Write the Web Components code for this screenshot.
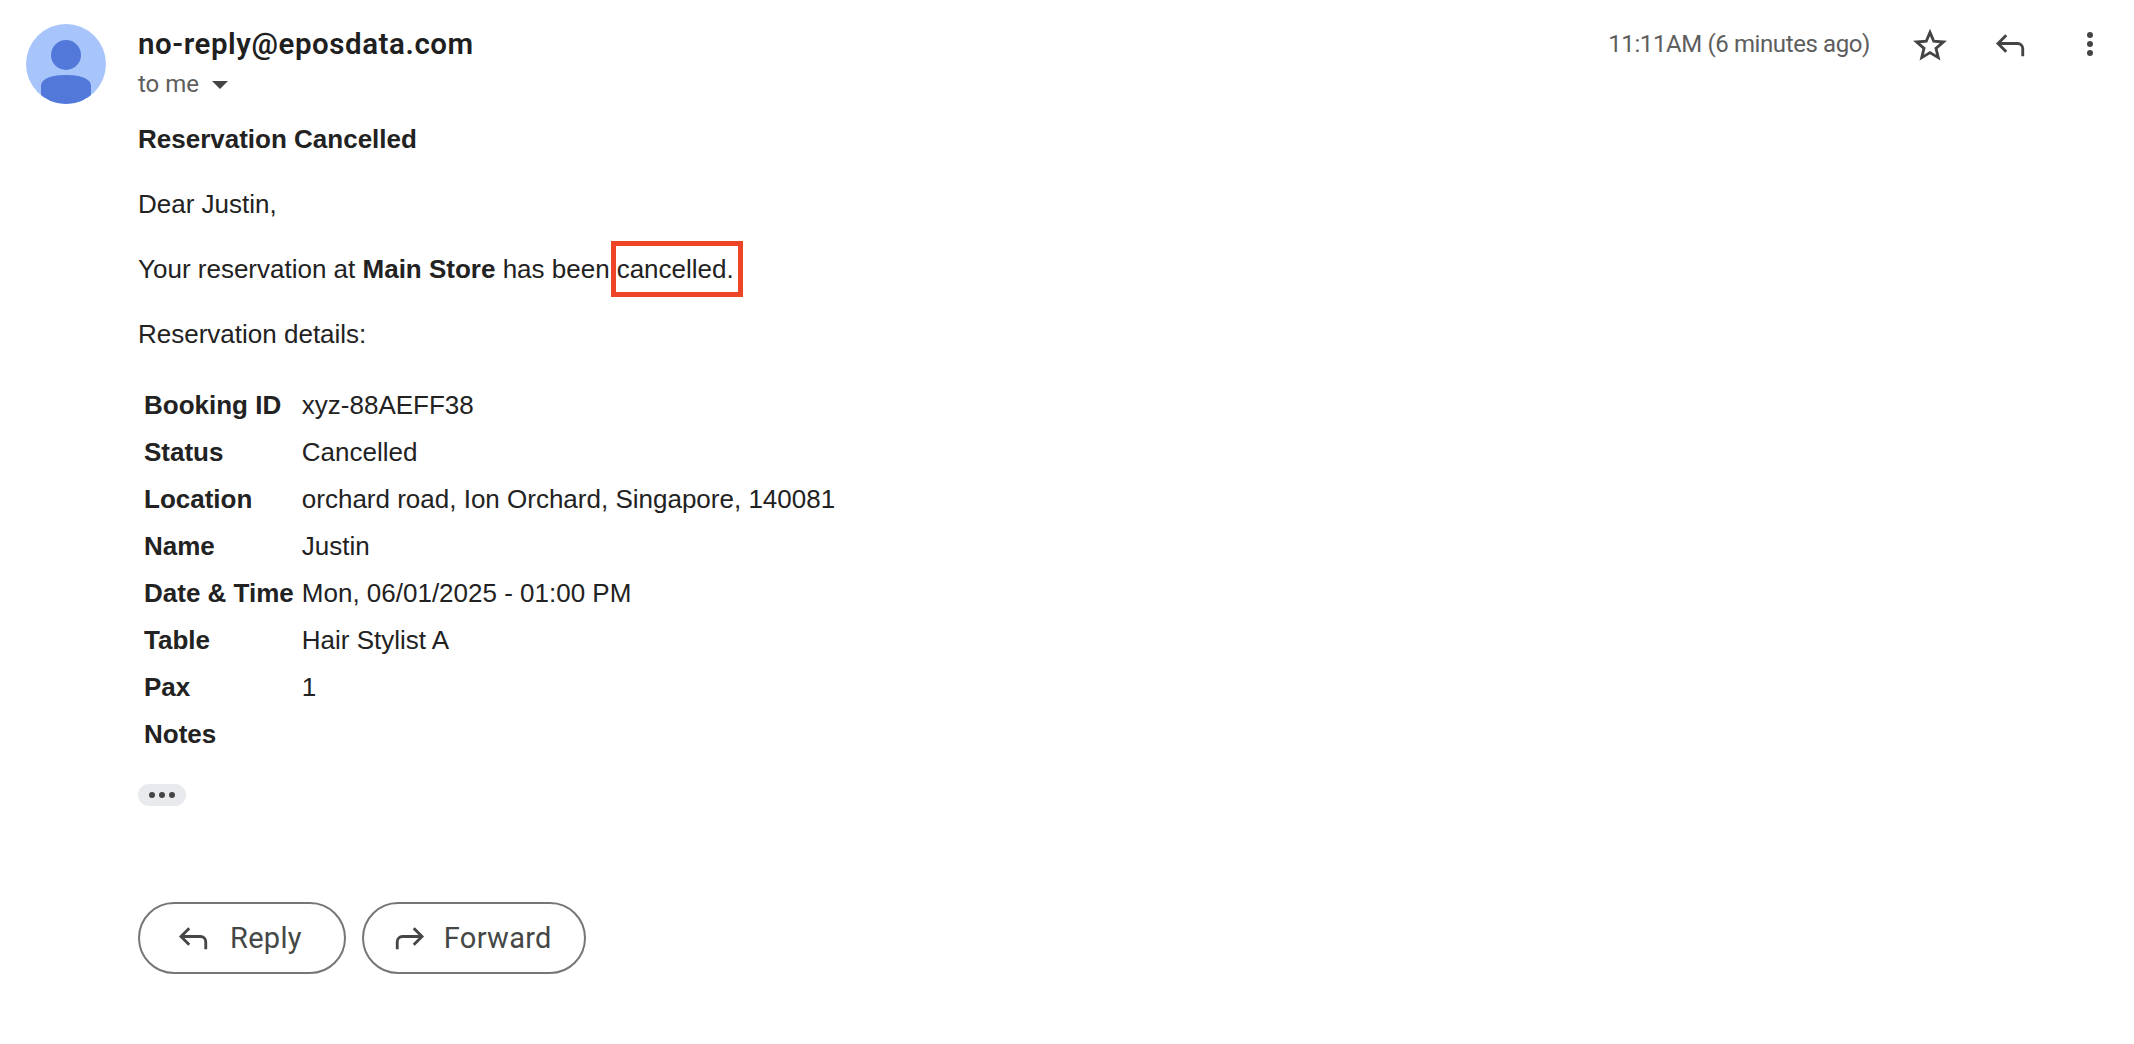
<!DOCTYPE html>
<html><head><meta charset="utf-8"><style>
html,body{margin:0;background:#fff}
body{font-family:"Liberation Sans",Arial,sans-serif;color:#222}
</style></head><body>
<mail-view>
<mail-avatar slot="avatar"></mail-avatar>
<mail-header slot="header" sender="no-reply@eposdata.com" time="11:11 AM" ago="(6 minutes ago)"></mail-header>
<mail-body slot="body"></mail-body>
<mail-more slot="body2"></mail-more>
<div slot="actions" style="display:flex;gap:16px">
<mail-button icon="reply">Reply</mail-button>
<mail-button icon="forward">Forward</mail-button>
</div>
</mail-view>
<script>
const REPLY='<path d="M9.5 6.5 4 12l5.5 5.5M4.5 12H17a3.5 3.5 0 0 1 3.5 3.5v5" transform="translate(0 -1)" fill="none" stroke="currentColor" stroke-width="1.9"/>';
const FWD='<path d="M14.5 6.5 20 12l-5.5 5.5M19.5 12H7a3.5 3.5 0 0 0-3.5 3.5v5" transform="translate(0 -1)" fill="none" stroke="currentColor" stroke-width="1.9"/>';
class MailView extends HTMLElement{constructor(){super();this.attachShadow({mode:'open'}).innerHTML=`<style>
:host{display:grid;grid-template-columns:112px 1fr;padding:24px 0 0 26px;box-sizing:border-box;width:2134px;height:1044px;overflow:hidden}
.col{display:flex;flex-direction:column;min-width:0}
.more{margin-top:26px}
.actions{margin-top:96px}
</style><div><slot name="avatar"></slot></div><div class="col"><slot name="header"></slot><slot name="body"></slot><div class="more"><slot name="body2"></slot></div><div class="actions"><slot name="actions"></slot></div></div>`}}
class MailAvatar extends HTMLElement{constructor(){super();this.attachShadow({mode:'open'}).innerHTML=`<style>:host{display:block;width:80px;height:80px}svg{display:block}</style>
<svg width="80" height="80" viewBox="0 0 80 80"><defs><clipPath id="c"><circle cx="40" cy="40" r="40"/></clipPath></defs><circle cx="40" cy="40" r="40" fill="#a8c5fb"/><g clip-path="url(#c)" fill="#5278d9"><circle cx="40" cy="31" r="15"/><path d="M15 72V62C15 54 27 51 40 51s25 3 25 11v10l-10 10H25z"/></g></svg>`}}
class MailHeader extends HTMLElement{constructor(){super();const s=this.getAttribute('sender'),t=this.getAttribute('time'),a=this.getAttribute('ago');this.attachShadow({mode:'open'}).innerHTML=`<style>
:host{display:flex;justify-content:space-between;align-items:flex-start;height:76px;font-family:Roboto,sans-serif}
.sender{font-size:29.5px;font-weight:600;line-height:32px;color:#1f1f1f;margin-top:4px;letter-spacing:.55px}
.to{font-size:24px;line-height:28px;color:#5e5e5e;margin-top:10px;display:flex;align-items:center;gap:13px}
.arrow{width:0;height:0;border:8px solid transparent;border-top:8px solid #444;border-bottom:0;margin-top:2px}
.right{display:flex;align-items:flex-start}
.time{font-size:24px;line-height:28px;color:#5e5e5e;margin-top:6px;margin-right:42px;white-space:nowrap;letter-spacing:-.4px}
.time span{word-spacing:-5.5px}
svg{display:block;color:#444}
.icons{display:flex;margin-right:38px;align-items:center;margin-top:3px}
.star{margin-right:44px}.rep{margin-right:56px}.dots{margin-top:-2px}
</style><div><div class="sender">${s}</div><div class="to">to me <span class="arrow"></span></div></div>
<div class="right"><div class="time"><span>${t}</span> ${a}</div><div class="icons">
<svg class="star" width="36" height="36" viewBox="0 0 24 24"><path d="M12 3.6l2.5 5.9 6.4.5-4.9 4.2 1.5 6.2L12 17.1l-5.5 3.3L8 14.2 3.1 10l6.4-.5z" fill="none" stroke="currentColor" stroke-width="1.9"/></svg>
<svg class="rep" width="36" height="36" viewBox="0 0 24 24">${REPLY}</svg>
<svg class="dots" width="12" height="36" viewBox="0 0 8 24"><circle cx="4" cy="6" r="2" fill="currentColor"/><circle cx="4" cy="12" r="2" fill="currentColor"/><circle cx="4" cy="18" r="2" fill="currentColor"/></svg>
</div></div>`}}
class MailBody extends HTMLElement{constructor(){super();const rows=[['Booking ID','xyz-88AEFF38'],['Status','Cancelled'],['Location','orchard road, Ion Orchard, Singapore, 140081'],['Name','Justin'],['Date &amp; Time','Mon, 06/01/2025 - 01:00 PM'],['Table','Hair Stylist A'],['Pax','1'],['Notes','']];
this.attachShadow({mode:'open'}).innerHTML=`<style>
:host{display:block;font:26px/29px "Liberation Sans",Arial,sans-serif;color:#222;margin-top:25px}
p{margin:0 0 36px}
h4{font:bold 26px/29px "Liberation Sans",Arial,sans-serif;margin:0 0 36px;color:#222}
b{font-weight:bold}
.hl{position:relative;margin-left:7px}
.box{position:absolute;left:-6px;right:-9px;top:-13px;bottom:-13px;border:5px solid #ee4528;box-sizing:border-box}
.t{display:grid;grid-template-columns:max-content max-content;grid-auto-rows:47px;column-gap:8px;padding-left:6px;align-items:center}
.t b,.t span{white-space:nowrap}
</style><h4>Reservation Cancelled</h4><p>Dear Justin,</p>
<p>Your reservation at <b>Main Store</b> has been<span class="hl">cancelled.<span class="box"></span></span></p>
<p style="margin-bottom:33px">Reservation details:</p>
<div class="t">${rows.map(r=>`<b>${r[0]}</b><span>${r[1]}</span>`).join('')}</div>`}}
class MailMore extends HTMLElement{constructor(){super();this.attachShadow({mode:'open'}).innerHTML=`<style>
:host{display:flex;align-items:center;justify-content:center;gap:4px;width:48px;height:22px;border-radius:11px;background:#e8eaed}
i{width:6px;height:6px;border-radius:50%;background:#444}</style><i></i><i></i><i></i>`}}
class MailButton extends HTMLElement{constructor(){super();const f=this.getAttribute('icon')==='forward';this.attachShadow({mode:'open'}).innerHTML=`<style>
:host{display:inline-flex;align-items:center;box-sizing:border-box;height:72px;border:2px solid #747775;border-radius:36px;padding:0 ${f?32:42}px 0 ${f?28:35}px;gap:${f?16:19}px;font:400 29px Roboto,sans-serif;color:#444746;letter-spacing:.3px}
svg{display:block}</style><svg width="36" height="36" viewBox="0 0 24 24">${f?FWD:REPLY}</svg><slot></slot>`}}
customElements.define('mail-view',MailView);customElements.define('mail-avatar',MailAvatar);customElements.define('mail-header',MailHeader);customElements.define('mail-body',MailBody);customElements.define('mail-more',MailMore);customElements.define('mail-button',MailButton);
</script></body></html>
